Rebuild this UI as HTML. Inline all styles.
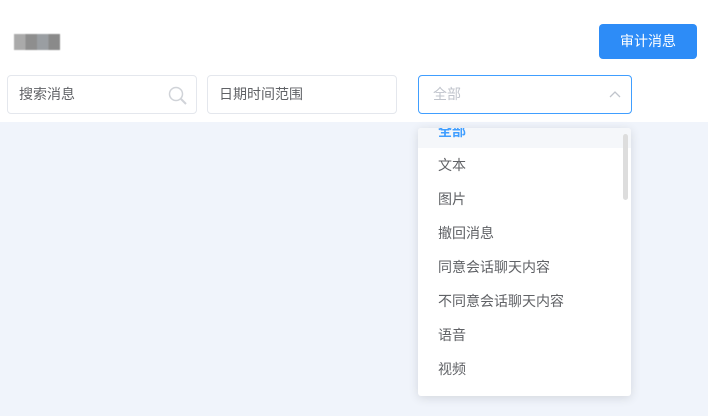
<!DOCTYPE html>
<html><head><meta charset="utf-8"><style>
*{margin:0;padding:0;box-sizing:border-box}
body{width:708px;height:416px;overflow:hidden;background:#f0f4fb;font-family:"Liberation Sans","Noto Sans CJK SC",sans-serif;position:relative}
.top{position:absolute;left:0;top:0;width:708px;height:122px;background:#fff}
.blur{position:absolute;left:14px;top:34px;width:46px;height:16px;background:linear-gradient(90deg,#aaa 0 25%,#8e8e8e 25% 50%,#9a9ea2 50% 75%,#8a8a8a 75%);filter:blur(0.6px)}
.btn{position:absolute;left:599px;top:24px;width:98px;height:35px;background:#2d8cf7;border-radius:4px;color:#fff;font-size:14px;text-align:center;line-height:35px}
.inp{position:absolute;top:75px;height:39px;border:1px solid #e4e7ed;border-radius:4px;font-size:14px;color:#606266;line-height:37px;padding-left:11px}
.sel{border-color:#409eff;color:#c0c4cc;padding-left:14px}
.dd{position:absolute;left:418px;top:128px;width:213px;height:268px;background:#fff;border-radius:3px;box-shadow:0 2px 10px rgba(0,0,0,.12);overflow:hidden}
.it{position:absolute;left:20px;font-size:14px;color:#606266}
.sb{position:absolute;left:205px;top:6px;width:5px;height:66px;background:#ddd;border-radius:3px}
</style></head><body>
<div class="top"></div>
<div class="blur"></div>
<div class="btn">审计消息</div>
<div class="inp" style="left:7px;width:190px">搜索消息
<svg style="position:absolute;left:160px;top:10px" width="20" height="20" viewBox="0 0 20 20"><circle cx="8" cy="8" r="6.5" fill="none" stroke="#d0d3d8" stroke-width="1.5"/><path d="M13 13l5 5" stroke="#d0d3d8" stroke-width="2"/></svg></div>
<div class="inp" style="left:207px;width:190px">日期时间范围</div>
<div class="inp sel" style="left:418px;width:214px">全部
<svg style="position:absolute;left:190px;top:14px" width="12" height="10" viewBox="0 0 12 10"><path d="M1 7l5-5 5 5" fill="none" stroke="#c0c4cc" stroke-width="1.3"/></svg></div>
<div class="dd">
<div style="position:absolute;left:0;top:0;width:213px;height:20px;background:#f5f7fa"></div>
<div class="it" style="top:-7px;color:#409eff;font-weight:bold">全部</div>
<div class="it" style="top:27px">文本</div>
<div class="it" style="top:61px">图片</div>
<div class="it" style="top:95px">撤回消息</div>
<div class="it" style="top:129px">同意会话聊天内容</div>
<div class="it" style="top:163px">不同意会话聊天内容</div>
<div class="it" style="top:197px">语音</div>
<div class="it" style="top:231px">视频</div>
<div class="sb"></div>
</div>
</body></html>
